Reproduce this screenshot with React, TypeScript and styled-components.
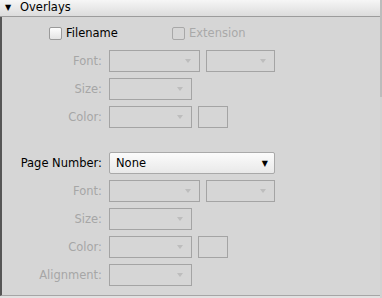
import React from 'react';
import styled, { createGlobalStyle } from 'styled-components';

const GlobalStyle = createGlobalStyle`
  html, body {
    margin: 0;
    padding: 0;
    background: #d6d6d6;
  }
  body {
    font-family: "DejaVu Sans", "Liberation Sans", sans-serif;
    font-size: 11.5px;
  }
`;

type Field = { label: string; widths: number[]; swatch?: boolean };

const textFields: Field[] = [
  { label: 'Font:', widths: [91, 69] },
  { label: 'Size:', widths: [83] },
  { label: 'Color:', widths: [83], swatch: true },
];

const pageFields: Field[] = [
  { label: 'Font:', widths: [91, 69] },
  { label: 'Size:', widths: [83] },
  { label: 'Color:', widths: [83], swatch: true },
  { label: 'Alignment:', widths: [83] },
];

function FieldRow({ field }: { field: Field }) {
  return (
    <Row>
      <Label $disabled>{field.label}</Label>
      {field.widths.map((w, i) => (
        <Select key={i} $width={w}>
          <SmallArrow />
        </Select>
      ))}
      {field.swatch && <Swatch />}
    </Row>
  );
}

// Overlays panel
export default function App() {
  return (
    <>
      <GlobalStyle />
      <Panel>
        <Main>
          <Header>
            <Disclosure>▼</Disclosure>
            <Title>Overlays</Title>
          </Header>
          <Body>
            <CheckRow>
              <Check>
                <Box />
                <CheckText>Filename</CheckText>
              </Check>
              <Check>
                <Box $disabled />
                <CheckText $disabled>Extension</CheckText>
              </Check>
            </CheckRow>
            {textFields.map((f) => (
              <FieldRow key={f.label} field={f} />
            ))}
            <Spacer />
            <Row>
              <Label>Page Number:</Label>
              <PopUp>
                <span>None</span>
                <BigArrow>▼</BigArrow>
              </PopUp>
            </Row>
            {pageFields.map((f) => (
              <FieldRow key={f.label} field={f} />
            ))}
          </Body>
          <Footer />
        </Main>
        <Scroller>
          <Thumb />
        </Scroller>
      </Panel>
    </>
  );
}

const Panel = styled.div`
  display: flex;
  width: 382px;
  height: 298px;
  overflow: hidden;
`;

const Main = styled.div`
  display: flex;
  flex-direction: column;
  width: 380px;
`;

const Header = styled.div`
  display: flex;
  align-items: center;
  height: 16px;
  padding-left: 5px;
  background: linear-gradient(#f6f6f6, #dcdcdc);
  border-bottom: 1px solid #9c9c9c;
  color: #000;
`;

const Disclosure = styled.span`
  font-size: 8px;
  width: 15px;
  line-height: 1;
`;

const Title = styled.span`
  font-size: 11.5px;
  line-height: 1;
`;

const Body = styled.div`
  flex: 1;
  padding-top: 5px;
  background: #d6d6d6;
  border-left: 2px solid #565656;
  border-bottom: 1px solid #a6a6a6;
`;

const Footer = styled.div`
  height: 2px;
  background: #e2e2e2;
`;

const CheckRow = styled.div`
  display: flex;
  align-items: center;
  height: 22px;
  margin-bottom: 6px;
  padding-left: 47px;
`;

const Check = styled.label`
  display: flex;
  align-items: center;
  gap: 4px;
  width: 123px;
`;

const Box = styled.span<{ $disabled?: boolean }>`
  box-sizing: border-box;
  width: 13px;
  height: 13px;
  border-radius: 2px;
  border: 1px solid ${(p) => (p.$disabled ? '#a8a8a8' : '#9a9a9a')};
  background: ${(p) => (p.$disabled ? 'transparent' : 'linear-gradient(#fdfdfd, #e4e4e4)')};
`;

const CheckText = styled.span<{ $disabled?: boolean }>`
  color: ${(p) => (p.$disabled ? '#a9a9a9' : '#000')};
  font-size: 11.5px;
`;

const Row = styled.div`
  display: flex;
  align-items: center;
  gap: 6px;
  height: 22px;
  margin-bottom: 6px;
`;

const Label = styled.span<{ $disabled?: boolean }>`
  width: 100px;
  margin-right: 1px;
  text-align: right;
  color: ${(p) => (p.$disabled ? '#a6a6a6' : '#000')};
  white-space: nowrap;
`;

const Select = styled.div<{ $width: number }>`
  box-sizing: border-box;
  display: flex;
  align-items: center;
  justify-content: flex-end;
  width: ${(p) => p.$width}px;
  height: 22px;
  padding-right: 8px;
  border: 1px solid #a4a4a4;
`;

const SmallArrow = styled.span`
  width: 0;
  height: 0;
  border-left: 3px solid transparent;
  border-right: 3px solid transparent;
  border-top: 4px solid #bdbdbd;
`;

const Swatch = styled.div`
  box-sizing: border-box;
  width: 30px;
  height: 22px;
  border: 1px solid #a4a4a4;
`;

const Spacer = styled.div`
  height: 18px;
`;

const PopUp = styled.div`
  box-sizing: border-box;
  display: flex;
  align-items: center;
  justify-content: space-between;
  width: 166px;
  height: 22px;
  padding: 0 6px 0 6px;
  border: 1px solid #a9a9a9;
  border-radius: 2px;
  background: linear-gradient(#fbfbfb, #e9e9e9);
  color: #000;
  font-size: 11.5px;
`;

const BigArrow = styled.span`
  font-size: 8px;
`;

const Scroller = styled.div`
  width: 2px;
  height: 298px;
  background: #d2d2d2;
`;

const Thumb = styled.div`
  height: 97px;
  background: #bcbcbc;
`;
